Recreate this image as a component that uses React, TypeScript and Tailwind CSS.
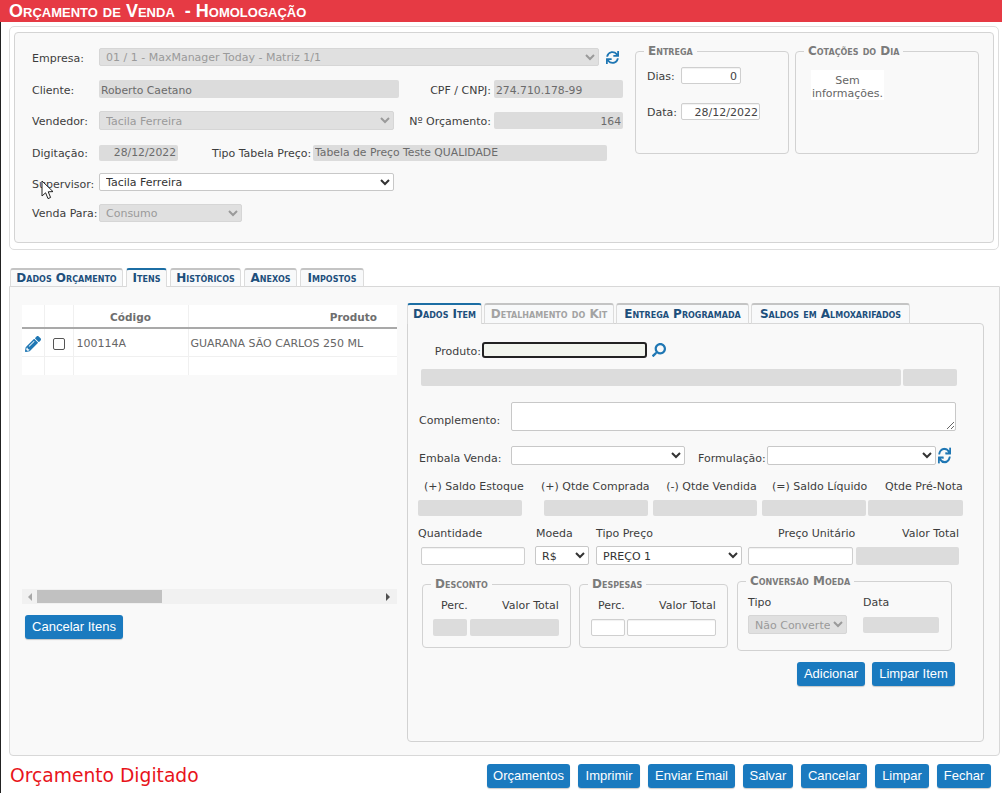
import { FaPencilAlt, FaSearch, FaSync } from 'react-icons/fa';

const textInput = 'block border border-[#cfcfcf] rounded-[2px] bg-white text-[#444] px-[3px] pt-[1px] outline-none shadow-[inset_0_1px_1px_rgba(0,0,0,0.06)]';
const lockedInput = 'block bg-[#dcdcdc] text-[#6b6b6b] rounded-[2px] px-[2px] pt-[2px] outline-none';
const pickInput = 'block border border-[#c8c8c8] rounded-[2px] bg-white text-[#333] pl-[2px] pt-[1px] outline-none';
const lockedPick = 'block border border-[#d6d6d6] rounded-[2px] bg-[#e0e0e0] text-[#9a9a9a] pl-[2px] pt-[1px] outline-none opacity-100';
const legendText = 'ml-[8px] px-[4px] text-[12px] leading-[12px] font-bold text-[#7b7b7b] [font-variant:small-caps] whitespace-nowrap';
const blueButton = 'h-[24px] flex items-center justify-center rounded-[3px] bg-[#1a7abf] text-white text-[13px] font-["Liberation_Sans",Arial,sans-serif] shadow-[0_1px_1px_rgba(0,0,0,0.2)]';

function TopTab({ label, active = false, muted = false, className = '' }: { label: string; active?: boolean; muted?: boolean; className?: string }) {
  return (
    <div
      className={`flex items-center justify-center rounded-t-[3px] border-x border-[#dcdcdc] text-[12px] font-bold [font-variant:small-caps] whitespace-nowrap ${
        active ? 'relative z-10 border-t-2 border-t-[#1c6ea4] bg-[#f9f9f9] pb-[2px]' : 'border-t-2 border-t-[#c4c4c4] border-b border-b-[#d8d8d8] bg-[#f8f9fa] pb-[1px]'
      } ${muted ? 'text-[#a3a3a3]' : 'text-[#1d4f7c]'} ${className}`}
    >
      {label}
    </div>
  );
}

function Cursor() {
  return (
    <svg className="absolute left-[41px] top-[180px]" width="13" height="20" viewBox="0 0 13 20">
      <path d="M1 1 L1 16 L4.6 12.8 L7 18.6 L9.6 17.5 L7.2 11.8 L12 11.6 Z" fill="#fff" stroke="#222" strokeWidth="1" strokeLinejoin="round" />
    </svg>
  );
}

export default function App() {
  return (
    <div className="relative w-[1002px] h-[793px] overflow-hidden bg-white font-['DejaVu_Sans',Verdana,sans-serif] text-[11px] text-[#3d3d3d]">
      <div className="h-[22px] bg-[#e63a44] flex items-center pl-[9px] text-white text-[18px] leading-none font-['Liberation_Sans',Arial,sans-serif] font-bold [font-variant:small-caps] whitespace-pre">
        Orçamento de Venda  - Homologação
      </div>

      <div className="h-[771px] border-l border-[#222] pt-[4px]">
        {/* cabecalho */}
        <div className="ml-[8px] w-[990px] h-[224px] border border-[#dedede] rounded-[5px] px-[4px] pt-[5px]">
          <div className="flex h-[211px] border border-[#d4d4d4] rounded-[4px] bg-[#f9f9f9] pl-[17px]">
            <div className="w-[591px] pt-[15px]">
              <div className="flex items-center h-[18px]">
                <span className="w-[67px] pt-[5px]">Empresa:</span>
                <select disabled className={`${lockedPick} w-[500px] h-[18px] text-[11px]`} defaultValue="1">
                  <option value="1">01 / 1 - MaxManager Today - Matriz 1/1</option>
                </select>
                <FaSync className="ml-[7px] text-[#1f77b4]" size={13} />
              </div>

              <div className="flex items-center h-[18px] mt-[14px]">
                <span className="w-[67px] pt-[4px]">Cliente:</span>
                <input readOnly value="Roberto Caetano" className={`${lockedInput} w-[300px] h-[18px] text-[10.8px]`} />
                <span className="w-[92px] pt-[4px] text-right whitespace-nowrap">CPF / CNPJ:</span>
                <input readOnly value="274.710.178-99" className={`${lockedInput} ml-[3px] w-[129px] h-[18px] text-[10.8px]`} />
              </div>

              <div className="flex items-center h-[19px] mt-[13px]">
                <span className="w-[67px] pt-[4px]">Vendedor:</span>
                <select disabled className={`${lockedPick} w-[295px] h-[19px] text-[11px]`} defaultValue="1">
                  <option value="1">Tacila Ferreira</option>
                </select>
                <span className="w-[97px] pt-[4px] text-right whitespace-nowrap">Nº Orçamento:</span>
                <input readOnly value="164" className={`${lockedInput} ml-[3px] w-[129px] h-[17px] text-[10.8px] text-right`} />
              </div>

              <div className="flex items-center h-[17px] mt-[14px]">
                <span className="w-[67px] pt-[4px]">Digitação:</span>
                <input readOnly value="28/12/2022" className={`${lockedInput} w-[79px] h-[16px] text-[10.8px] text-right`} />
                <span className="ml-[34px] w-[99px] pt-[4px] whitespace-nowrap">Tipo Tabela Preço:</span>
                <input readOnly value="Tabela de Preço Teste QUALIDADE" className={`${lockedInput} ml-[2px] w-[294px] h-[16px] text-[10.8px]`} />
              </div>

              <div className="flex items-center h-[18px] mt-[12px]">
                <span className="w-[67px] pt-[7px]">Supervisor:</span>
                <select className={`${pickInput} w-[295px] h-[18px] text-[11px]`} defaultValue="1">
                  <option value="1">Tacila Ferreira</option>
                </select>
              </div>

              <div className="flex items-center h-[18px] mt-[13px]">
                <span className="w-[67px] pt-[2px] whitespace-nowrap">Venda Para:</span>
                <select disabled className={`${lockedPick} w-[143px] h-[18px] text-[11px]`} defaultValue="1">
                  <option value="1">Consumo</option>
                </select>
              </div>
            </div>

            <fieldset className="ml-[12px] mt-[12px] w-[154px] h-[109px] border border-[#d2d2d2] rounded-[4px]">
              <legend className={legendText}>Entrega</legend>
              <div className="flex items-center h-[17px] mt-[10px] pl-[11px]">
                <span className="w-[34px] pt-[3px]">Dias:</span>
                <input readOnly value="0" className={`${textInput} w-[60px] h-[17px] text-[11px] text-right`} />
              </div>
              <div className="flex items-center h-[17px] mt-[19px] pl-[11px]">
                <span className="w-[34px] pt-[3px]">Data:</span>
                <input readOnly value="28/12/2022" className={`${textInput} w-[79px] h-[17px] text-[11px] text-right !px-[1px]`} />
              </div>
            </fieldset>

            <fieldset className="ml-[6px] mt-[12px] w-[184px] h-[109px] border border-[#d2d2d2] rounded-[4px]">
              <legend className={legendText}>Cotações do Dia</legend>
              <div className="ml-[15px] mt-[13px] w-[73px] h-[30px] bg-white text-center text-[11px] leading-[13px] text-[#666] whitespace-nowrap pt-[4px]">
                Sem
                <br />
                informações.
              </div>
            </fieldset>
          </div>
        </div>

        {/* abas */}
        <div className="flex ml-[9px] mt-[18px] h-[19px] gap-[3px]">
          <TopTab label="Dados Orçamento" className="w-[113px]" />
          <TopTab label="Itens" active className="w-[41px]" />
          <TopTab label="Históricos" className="w-[71px]" />
          <TopTab label="Anexos" className="w-[53px]" />
          <TopTab label="Impostos" className="w-[64px]" />
        </div>

        <div className="flex ml-[8px] w-[991px] h-[470px] -mt-px border border-[#d8d8d8] rounded-b-[4px] bg-[#f9f9f9] pl-[12px] pt-[16px]">
          {/* itens */}
          <div className="w-[375px] pt-[2px]">
            <table className="w-[375px] table-fixed border-collapse bg-white">
              <colgroup>
                <col className="w-[22px]" />
                <col className="w-[29px]" />
                <col className="w-[115px]" />
                <col className="w-[209px]" />
              </colgroup>
              <thead>
                <tr className="h-[23px] border-b-2 border-[#a9a9a9] text-[10.5px] text-[#6e6e6e]">
                  <th className="border-r border-[#f0f0f0] font-bold" />
                  <th className="border-r border-[#f0f0f0] font-bold" />
                  <th className="border-r border-[#f0f0f0] font-bold text-center pt-[3px]">Código</th>
                  <th className="font-bold text-right pr-[20px] pt-[3px]">Produto</th>
                </tr>
              </thead>
              <tbody>
                <tr className="h-[28px] border-b border-[#f0f0f0] text-[11px] text-[#666]">
                  <td className="border-r border-[#f0f0f0] pl-[3px] pt-[3px]">
                    <FaPencilAlt className="text-[#1f77b4]" size={16} />
                  </td>
                  <td className="border-r border-[#f0f0f0] pl-[8px] pt-[3px]">
                    <span className="block w-[12px] h-[12px] border border-[#555] rounded-[2px] bg-white" />
                  </td>
                  <td className="border-r border-[#f0f0f0] pl-[3px] pt-[3px]">100114A</td>
                  <td className="pl-[2px] pt-[3px] whitespace-nowrap">GUARANA SÃO CARLOS 250 ML</td>
                </tr>
                <tr className="h-[19px]">
                  <td className="border-r border-[#f0f0f0]" />
                  <td className="border-r border-[#f0f0f0]" />
                  <td className="border-r border-[#f0f0f0]" />
                  <td />
                </tr>
              </tbody>
            </table>

            <div className="flex items-center h-[15px] mt-[214px] bg-[#f1f1f1]">
              <svg className="ml-[5px]" width="6" height="8" viewBox="0 0 6 8">
                <path d="M5 0 L1 4 L5 8 Z" fill="#a8a8a8" />
              </svg>
              <div className="ml-[4px] w-[125px] h-[13px] bg-[#c1c1c1]" />
              <svg className="ml-auto mr-[6px]" width="6" height="8" viewBox="0 0 6 8">
                <path d="M1 0 L5 4 L1 8 Z" fill="#505050" />
              </svg>
            </div>

            <button className={`${blueButton} ml-[3px] mt-[11px] w-[98px]`}>Cancelar Itens</button>
          </div>

          {/* dados do item */}
          <div className="ml-[10px] w-[577px]">
            <div className="flex h-[21px] gap-[2px]">
              <TopTab label="Dados Item" active className="w-[75px]" />
              <TopTab label="Detalhamento do Kit" muted className="w-[130px]" />
              <TopTab label="Entrega Programada" className="w-[133px]" />
              <TopTab label="Saldos em Almoxarifados" className="w-[159px]" />
            </div>

            <div className="h-[419px] -mt-px border border-[#d2d2d2] rounded-[4px] rounded-tl-none">
              <div className="flex items-center h-[16px] mt-[18px]">
                <span className="w-[74px] pt-[4px] text-right pr-[1px]">Produto:</span>
                <input readOnly className="block w-[165px] h-[16px] border-2 border-[#222] rounded-[3px] bg-[#f2f5ee] outline-none" />
                <FaSearch className="ml-[5px] -scale-x-100 text-[#1f77b4]" size={14} />
              </div>

              <div className="flex mt-[11px] ml-[13px]">
                <div className="w-[480px] h-[17px] bg-[#dcdcdc] rounded-[2px]" />
                <div className="ml-[2px] w-[54px] h-[17px] bg-[#dcdcdc] rounded-[2px]" />
              </div>

              <div className="flex items-center h-[29px] mt-[16px] ml-[11px]">
                <span className="w-[92px] pt-[10px]">Complemento:</span>
                <textarea readOnly className="block w-[445px] h-[29px] border border-[#c8c8c8] rounded-[2px] bg-white outline-none" />
              </div>

              <div className="flex items-center h-[19px] mt-[15px] ml-[11px]">
                <span className="w-[92px] pt-[7px]">Embala Venda:</span>
                <select className={`${pickInput} w-[174px] h-[19px]`} />
                <span className="ml-[13px] w-[69px] pt-[7px] whitespace-nowrap">Formulação:</span>
                <select className={`${pickInput} w-[169px] h-[19px]`} />
                <FaSync className="ml-[2px] scale-y-125 text-[#1f77b4]" size={13} />
              </div>

              <div className="flex items-center h-[14px] mt-[13px] pt-[4px] whitespace-nowrap">
                <span className="ml-[16px] w-[99px] text-center">(+) Saldo Estoque</span>
                <span className="ml-[18px] w-[107px] text-center">(+) Qtde Comprada</span>
                <span className="ml-[18px] w-[91px] text-center">(-) Qtde Vendida</span>
                <span className="ml-[15px] w-[94px] text-center">(=) Saldo Líquido</span>
                <span className="ml-[19px] w-[77px] text-center">Qtde Pré-Nota</span>
              </div>

              <div className="flex mt-[8px] ml-[10px]">
                <div className="w-[104px] h-[16px] bg-[#dcdcdc] rounded-[2px]" />
                <div className="ml-[22px] w-[104px] h-[16px] bg-[#dcdcdc] rounded-[2px]" />
                <div className="ml-[5px] w-[104px] h-[16px] bg-[#dcdcdc] rounded-[2px]" />
                <div className="ml-[5px] w-[104px] h-[16px] bg-[#dcdcdc] rounded-[2px]" />
                <div className="ml-[2px] w-[95px] h-[16px] bg-[#dcdcdc] rounded-[2px]" />
              </div>

              <div className="flex items-center h-[14px] mt-[10px] pt-[2px] whitespace-nowrap">
                <span className="ml-[10px] w-[118px]">Quantidade</span>
                <span className="w-[60px]">Moeda</span>
                <span className="w-[182px]">Tipo Preço</span>
                <span className="w-[75px]">Preço Unitário</span>
                <span className="w-[106px] text-right">Valor Total</span>
              </div>

              <div className="flex items-center h-[19px] mt-[6px]">
                <input readOnly className={`${textInput} ml-[13px] w-[104px] h-[18px]`} />
                <select className={`${pickInput} ml-[10px] w-[54px] h-[19px] text-[11px]`} defaultValue="1">
                  <option value="1">R$</option>
                </select>
                <select className={`${pickInput} ml-[7px] w-[146px] h-[19px] text-[11px]`} defaultValue="1">
                  <option value="1">PREÇO 1</option>
                </select>
                <input readOnly className={`${textInput} ml-[6px] w-[105px] h-[18px]`} />
                <div className="ml-[3px] w-[103px] h-[18px] bg-[#dcdcdc] rounded-[2px]" />
              </div>

              <div className="flex items-start mt-[10px]">
                <fieldset className="mt-[3px] ml-[14px] w-[149px] h-[70px] border border-[#d2d2d2] rounded-[4px]">
                  <legend className={legendText}>Desconto</legend>
                  <div className="flex h-[14px] mt-[8px]">
                    <span className="ml-[18px] w-[61px]">Perc.</span>
                    <span className="whitespace-nowrap">Valor Total</span>
                  </div>
                  <div className="flex mt-[7px] ml-[10px]">
                    <div className="w-[34px] h-[17px] bg-[#dcdcdc] rounded-[2px]" />
                    <div className="ml-[3px] w-[89px] h-[17px] bg-[#dcdcdc] rounded-[2px]" />
                  </div>
                </fieldset>

                <fieldset className="mt-[3px] ml-[8px] w-[149px] h-[70px] border border-[#d2d2d2] rounded-[4px]">
                  <legend className={legendText}>Despesas</legend>
                  <div className="flex h-[14px] mt-[8px]">
                    <span className="ml-[18px] w-[61px]">Perc.</span>
                    <span className="whitespace-nowrap">Valor Total</span>
                  </div>
                  <div className="flex mt-[7px] ml-[11px]">
                    <input readOnly className={`${textInput} w-[34px] h-[17px]`} />
                    <input readOnly className={`${textInput} ml-[2px] w-[89px] h-[17px]`} />
                  </div>
                </fieldset>

                <fieldset className="ml-[9px] w-[215px] h-[76px] border border-[#d2d2d2] rounded-[4px]">
                  <legend className={legendText}>Conversão Moeda</legend>
                  <div className="flex items-center h-[14px] mt-[8px] ml-[10px] pt-[2px]">
                    <span className="w-[115px]">Tipo</span>
                    <span>Data</span>
                  </div>
                  <div className="flex items-center mt-[6px] ml-[10px]">
                    <select disabled className={`${lockedPick} w-[99px] h-[19px] text-[11px]`} defaultValue="1">
                      <option value="1">Não Converte</option>
                    </select>
                    <div className="ml-[16px] w-[76px] h-[16px] bg-[#dcdcdc] rounded-[2px]" />
                  </div>
                </fieldset>
              </div>

              <div className="flex justify-end gap-[7px] mt-[11px] pr-[28px]">
                <button className={`${blueButton} w-[68px]`}>Adicionar</button>
                <button className={`${blueButton} w-[83px]`}>Limpar Item</button>
              </div>
            </div>
          </div>
        </div>

        {/* rodape */}
        <div className="flex items-center h-[24px] mt-[8px] ml-[9px] mr-[11px]">
          <span className="text-[18.7px] text-[#e8141a] whitespace-nowrap">Orçamento Digitado</span>
          <div className="flex ml-auto gap-[8px]">
            <button className={`${blueButton} w-[83px]`}>Orçamentos</button>
            <button className={`${blueButton} w-[62px]`}>Imprimir</button>
            <button className={`${blueButton} w-[87px]`}>Enviar Email</button>
            <button className={`${blueButton} w-[50px]`}>Salvar</button>
            <button className={`${blueButton} w-[66px]`}>Cancelar</button>
            <button className={`${blueButton} w-[54px]`}>Limpar</button>
            <button className={`${blueButton} w-[54px]`}>Fechar</button>
          </div>
        </div>
      </div>

      <Cursor />
    </div>
  );
}
